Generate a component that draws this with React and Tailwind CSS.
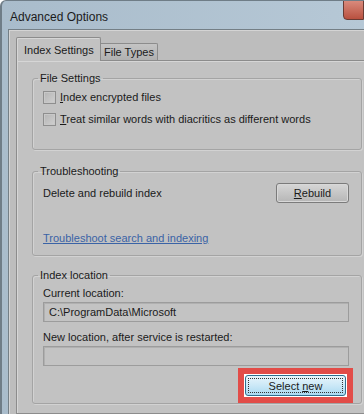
import React from 'react';

const font = { fontFamily: '"Liberation Sans", Arial, sans-serif' };

const Checkbox = ({ keyChar, rest }) => (
    <label className="flex items-center h-[14px] gap-[4px]">
        <span className="w-[13px] h-[13px] border border-[#8e8e8e] bg-gradient-to-br from-[#b4b4b4] to-[#d0d0d0] shadow-[inset_0_0_0_1px_#c8c8c8]" />
        <span><u>{keyChar}</u>{rest}</span>
    </label>
);

const Group = ({ title, className = '', children }) => (
    <fieldset className={`w-[330px] border border-[#a4a4a4] rounded-[3px] shadow-[inset_1px_1px_0_#d2d2d2,1px_1px_0_#d2d2d2] px-[10px] ${className}`}>
        <legend className="-ml-[5px] px-[2px] leading-[14px]">{title}</legend>
        {children}
    </fieldset>
);

const TextField = ({ value }) => (
    <div className="h-[20px] w-[306px] border border-[#9c9c9c] bg-[#c3c3c3] shadow-[inset_1px_1px_0_#b0b0b0] pl-[5px] flex items-center leading-[14px]">
        {value}
    </div>
);

const App = () => {
    return (
        <div className="w-[364px] h-[414px] overflow-hidden flex flex-col bg-gradient-to-r from-[#a9bccb] to-[#b6c8d6] border-l-[2px] border-t border-[#6f7d87] rounded-tl-[6px] text-[11px] text-[#1a1a1a]" style={font}>
            {/* title bar */}
            <div className="h-[28px] flex shrink-0">
                <div className="flex-1 pl-[8px] pt-[9px] text-[12px] leading-[14px] text-[#1b1b1b]">Advanced Options</div>
                <div className="w-[21px] h-[20px] -mt-px border border-[#6a3b33] rounded-bl-[4px] bg-gradient-to-b from-[#d98a7c] to-[#b8503f]" />
            </div>

            {/* dialog body */}
            <div className="flex-1 ml-[6px] border-l border-t border-[#747f86] bg-[#bdbdbd] shadow-[inset_1px_1px_0_#d4d4d4] flex flex-col">
                <div className="h-[30px] flex items-end pl-[7px] shrink-0">
                    <div className="relative z-10 -mb-px h-[24px] w-[85px] border border-b-0 border-[#8c8c8c] rounded-t-[2px] bg-[#c2c2c2] shadow-[inset_1px_1px_0_#d6d6d6] pl-[7px] pt-[5px] leading-[14px]">
                        Index Settings
                    </div>
                    <div className="h-[17px] w-[57px] border border-l-0 border-b-0 border-[#8c8c8c] rounded-tr-[2px] bg-gradient-to-b from-[#c4c4c4] to-[#b0b0b0] pl-[3px] pt-[1px] leading-[14px]">
                        File Types
                    </div>
                </div>

                <div className="flex-1 ml-[7px] w-[380px] border border-[#8c8c8c] bg-[#c2c2c2] shadow-[inset_1px_1px_0_#d6d6d6] pl-[15px] pt-[10px] flex flex-col">
                    <Group title="File Settings" className="pb-[23px]">
                        <div className="mt-[5px]">
                            <Checkbox keyChar="I" rest="ndex encrypted files" />
                        </div>
                        <div className="mt-[8px]">
                            <Checkbox keyChar="T" rest="reat similar words with diacritics as different words" />
                        </div>
                    </Group>

                    <Group title="Troubleshooting" className="mt-[14px] pb-[10px]">
                        <div className="mt-[5px] h-[20px] flex items-center justify-between pr-[2px]">
                            <span className="leading-[14px]">Delete and rebuild index</span>
                            <button className="w-[73px] h-[20px] border border-[#7b7b7b] rounded-[3px] bg-gradient-to-b from-[#d6d6d6] to-[#b6b6b6] shadow-[inset_0_0_0_1px_#d8d8d8] leading-[14px]">
                                <u>R</u>ebuild
                            </button>
                        </div>
                        <div className="mt-[28px] leading-[14px]">
                            <a href="#" className="text-[#3a63a6] underline">Troubleshoot search and indexing</a>
                        </div>
                    </Group>

                    <Group title="Index location" className="mt-[12px] pb-0">
                        <div className="mt-[4px] leading-[14px]">Current location:</div>
                        <div className="mt-[2px]">
                            <TextField value="C:\ProgramData\Microsoft" />
                        </div>
                        <div className="mt-[8px] leading-[14px]">New location, after service is restarted:</div>
                        <div className="mt-[2px]">
                            <TextField value="" />
                        </div>
                        <div className="mt-[2px] flex justify-end -mr-[2px]">
                            <div className="w-[115px] h-[35px] border-[6px] border-[#e24c48] bg-white p-[1px]">
                                <button className="w-full h-full border border-[#2f6f8f] rounded-[3px] bg-gradient-to-b from-[#e8f5fc] via-[#cbe8f7] to-[#a9d9f1] p-[2px]">
                                    <span className="flex items-center justify-center w-full h-full border border-dotted border-[#333] leading-[14px]">
                                        Select <u className="ml-[3px]">n</u>ew
                                    </span>
                                </button>
                            </div>
                        </div>
                    </Group>
                </div>
            </div>
        </div>
    );
};

export default App;
